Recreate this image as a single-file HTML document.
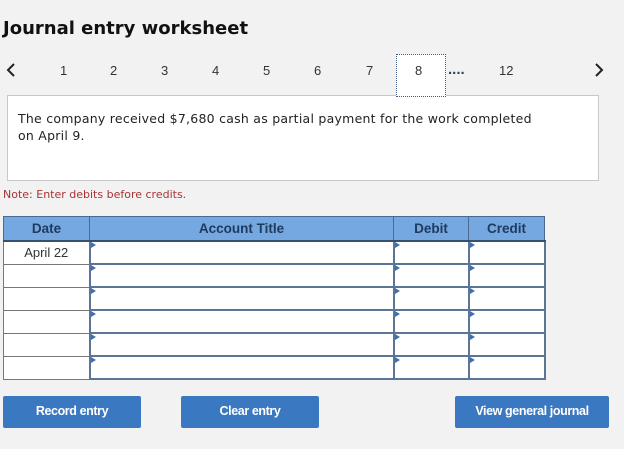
<!DOCTYPE html>
<html><head><style>
body{margin:0;width:624px;height:449px;background:#f2f2f2;font-family:"DejaVu Sans","Liberation Sans",sans-serif;position:relative;overflow:hidden}
.a{position:absolute}
h1{position:absolute;left:3px;top:18px;margin:0;font-size:18px;font-weight:bold;color:#111}
.n{position:absolute;top:63px;font-family:"Liberation Sans",sans-serif;font-size:13px;color:#333}
.box{left:7px;top:95px;width:590px;height:84px;background:#fff;border:1px solid #c8c8c8}
.box p{margin:14px 0 0 10px;font-size:12.5px;line-height:17px;color:#222;width:525px;letter-spacing:0.25px}
.note{left:3px;top:188px;font-size:11px;color:#a33}
table{position:absolute;left:3px;top:216px;border-collapse:collapse;font-family:"Liberation Sans",sans-serif;table-layout:fixed;width:541px}
th{background:#75a7e0;color:#1e3a5f;font-size:13.5px;font-weight:bold;height:23px;border:1px solid #4a6a90;border-bottom:2px solid #36506e;padding:0}
td{height:21px;background:#fff;padding:0;position:relative}
td.d{border:1px solid #777;text-align:center;font-size:13px;color:#333}
td.i{border:2px solid #5a7595}
td.i:before{content:"";position:absolute;left:0;top:0;border-left:5px solid #3f6fb0;border-top:3px solid transparent;border-bottom:3px solid transparent}
.btn{position:absolute;top:396px;height:32px;background:#3a78c1;color:#fff;border-radius:2px;font-family:"Liberation Sans",sans-serif;font-size:12.5px;font-weight:bold;text-align:center;line-height:31px;letter-spacing:-0.4px}
</style></head><body>
<h1>Journal entry worksheet</h1>
<svg class="a" style="left:6px;top:63px" width="10" height="14"><path d="M8 1 L2 7 L8 13" fill="none" stroke="#222" stroke-width="2"/></svg>
<div class="n" style="left:60px">1</div><div class="n" style="left:110px">2</div><div class="n" style="left:161px">3</div><div class="n" style="left:212px">4</div><div class="n" style="left:263px">5</div><div class="n" style="left:314px">6</div><div class="n" style="left:366px">7</div>
<div class="a" style="left:396px;top:54px;width:50px;height:43px;background:#fff;border:1px dotted #3a5a85;box-sizing:border-box;z-index:2"></div>
<div class="n" style="left:415px;z-index:3">8</div>
<div class="n" style="left:448px;font-weight:bold;color:#345;font-size:15px;top:61px">....</div>
<div class="n" style="left:499px">12</div>
<svg class="a" style="left:594px;top:63px" width="10" height="14"><path d="M2 1 L8 7 L2 13" fill="none" stroke="#222" stroke-width="2"/></svg>
<div class="a box"><p>The company received $7,680 cash as partial payment for the work completed on April 9.</p></div>
<div class="a note">Note: Enter debits before credits.</div>
<table>
<colgroup><col style="width:86px"><col style="width:304px"><col style="width:75px"><col style="width:76px"></colgroup>
<tr><th>Date</th><th>Account Title</th><th>Debit</th><th>Credit</th></tr>
<tr><td class="d">April 22</td><td class="i"></td><td class="i"></td><td class="i"></td></tr>
<tr><td class="d"></td><td class="i"></td><td class="i"></td><td class="i"></td></tr>
<tr><td class="d"></td><td class="i"></td><td class="i"></td><td class="i"></td></tr>
<tr><td class="d"></td><td class="i"></td><td class="i"></td><td class="i"></td></tr>
<tr><td class="d"></td><td class="i"></td><td class="i"></td><td class="i"></td></tr>
<tr><td class="d"></td><td class="i"></td><td class="i"></td><td class="i"></td></tr>
</table>
<div class="btn" style="left:3px;width:138px">Record entry</div>
<div class="btn" style="left:181px;width:138px">Clear entry</div>
<div class="btn" style="left:455px;width:154px">View general journal</div>
</body></html>
